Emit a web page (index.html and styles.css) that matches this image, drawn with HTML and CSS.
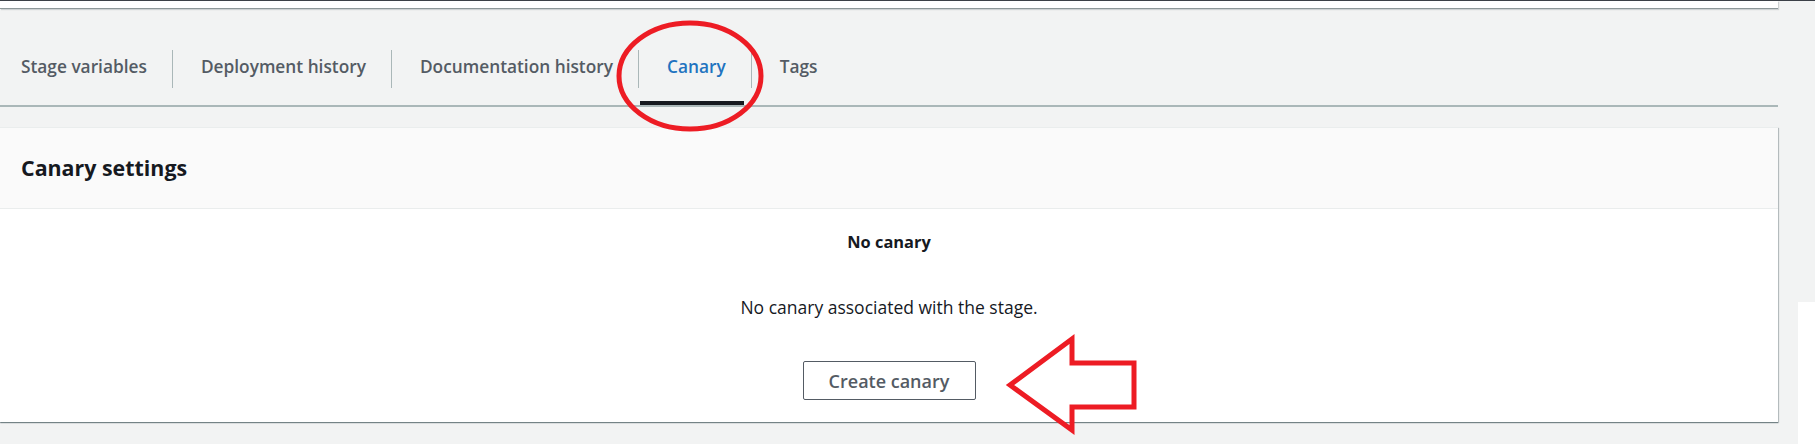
FILE: index.html
```html
<!DOCTYPE html>
<html lang="en">
<head>
<meta charset="utf-8">
<title>Canary</title>
<link rel="stylesheet" href="styles.css">
</head>
<body>
<div class="page">
  <div class="main">
    <div class="topbox"></div>
    <nav class="tabs">
      <a class="tab first">Stage variables</a>
      <a class="tab">Deployment history</a>
      <a class="tab">Documentation history</a>
      <a class="tab active">Canary</a>
      <a class="tab">Tags</a>
    </nav>
    <section class="card">
      <header class="card-header"><h2 class="card-title">Canary settings</h2></header>
      <div class="card-body">
        <p class="empty-title">No canary</p>
        <p class="empty-text">No canary associated with the stage.</p>
        <button class="btn" type="button">Create canary</button>
      </div>
    </section>
  </div>
  <div class="gutter"><div class="gutter-white"></div></div>
  <svg class="annotations" width="1815" height="444" viewBox="0 0 1815 444" aria-hidden="true">
    <ellipse cx="690" cy="76" rx="71" ry="53" fill="none" stroke="#ed1c24" stroke-width="5"/>
    <polygon points="1010,385 1072,339 1072,363 1134,363 1134,407 1072,407 1072,430" fill="none" stroke="#ed1c24" stroke-width="5" stroke-linejoin="miter"/>
  </svg>
</div>
</body>
</html>
```

FILE: styles.css
```css
* { box-sizing: border-box; }
html, body { margin: 0; padding: 0; }
body {
  width: 1815px;
  height: 444px;
  overflow: hidden;
  background: #f2f3f3;
  font-family: "Open Sans", "Noto Sans", sans-serif;
  color: #16191f;
}
.page {
  position: relative;
  display: flex;
  height: 444px;
  border-top: 1px solid #3b4047;
}
.main {
  width: 1778px;
  display: flex;
  flex-direction: column;
}
.topbox {
  height: 8px;
  background: #ffffff;
  border-bottom: 1px solid #8d9799;
  box-shadow: 1px 1px 1px rgba(0, 28, 36, 0.15);
}
.tabs {
  display: flex;
  align-items: flex-end;
  height: 98px;
  border-bottom: 2px solid #aab7b8;
}
.tab {
  position: relative;
  height: 55px;
  line-height: 34px;
  padding: 0 25px 0 29px;
  font-size: 17.3px;
  font-weight: 600;
  color: #545b64;
  white-space: nowrap;
}
.tab::before {
  content: "";
  position: absolute;
  left: 0;
  top: 0;
  width: 1px;
  height: 38px;
  background: #aab7b8;
}
.tab.first { padding-left: 21px; }
.tab.first::before { display: none; }
.tab.active { color: #1f73c0; }
.tab.active::after {
  content: "";
  position: absolute;
  left: 2px;
  right: 7px;
  bottom: 0;
  height: 4px;
  background: #16191f;
}
.card {
  margin-top: 20px;
  background: #ffffff;
  border-top: 1px solid #eaeded;
  box-shadow: 0 1px 1px 0 rgba(0, 28, 36, 0.4), 1px 1px 1px 0 rgba(0, 28, 36, 0.2);
}
.card-header {
  height: 81px;
  background: #fafafa;
  border-bottom: 1px solid #eaeded;
  display: flex;
  align-items: center;
  padding: 0 21px 2px;
}
.card-title {
  margin: 0;
  font-size: 21.4px;
  font-weight: 700;
  color: #16191f;
}
.card-body {
  height: 213px;
  display: flex;
  flex-direction: column;
  align-items: center;
  padding-top: 22px;
}
.empty-title {
  margin: 0;
  font-size: 16.4px;
  line-height: 22px;
  font-weight: 700;
}
.empty-text {
  margin: 43px 0 0;
  font-size: 17.5px;
  line-height: 22px;
}
.btn {
  margin-top: 43px;
  width: 173px;
  height: 39px;
  background: #ffffff;
  border: 1px solid #545b64;
  border-radius: 2px;
  font-family: inherit;
  font-size: 18px;
  font-weight: 600;
  color: #545b64;
}
.gutter {
  flex: 1;
  display: flex;
  flex-direction: column;
  justify-content: flex-end;
  align-items: flex-end;
}
.gutter-white {
  width: 17px;
  height: 142px;
  background: #ffffff;
}
.annotations {
  position: absolute;
  left: 0;
  top: -1px;
  pointer-events: none;
}
```
